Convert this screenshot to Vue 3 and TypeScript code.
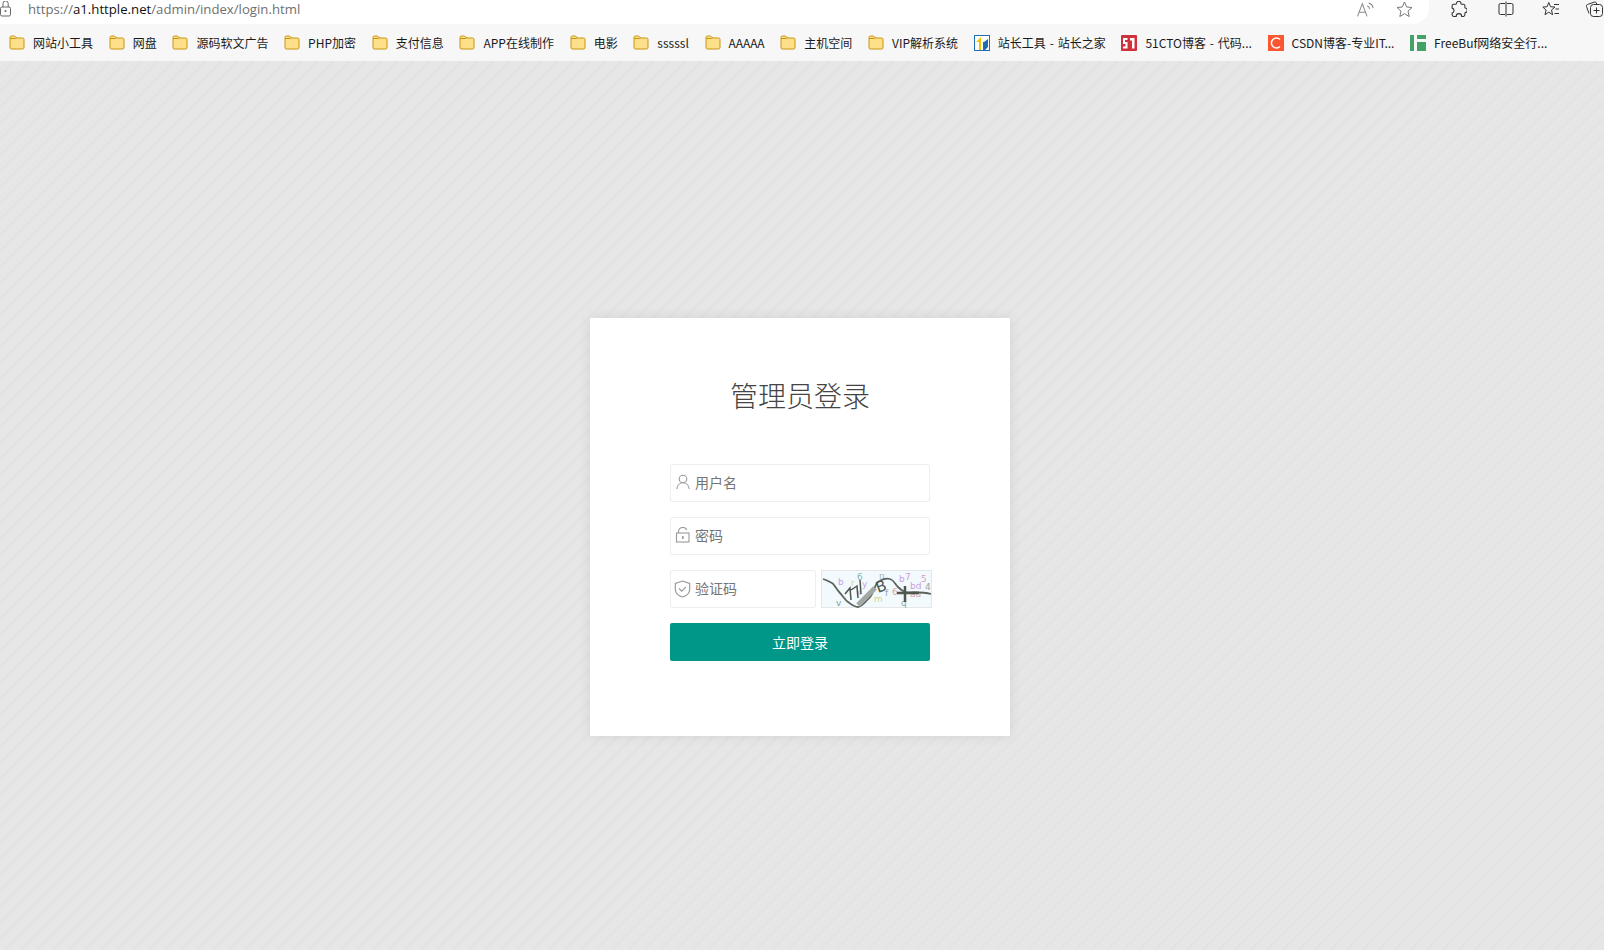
<script setup lang="ts">
interface Bookmark {
  label: string
  icon: 'folder' | 'chinaz' | 'cto' | 'csdn' | 'freebuf'
}

const bookmarks: Bookmark[] = [
  { label: '网站小工具', icon: 'folder' },
  { label: '网盘', icon: 'folder' },
  { label: '源码软文广告', icon: 'folder' },
  { label: 'PHP加密', icon: 'folder' },
  { label: '支付信息', icon: 'folder' },
  { label: 'APP在线制作', icon: 'folder' },
  { label: '电影', icon: 'folder' },
  { label: 'sssssl', icon: 'folder' },
  { label: 'AAAAA', icon: 'folder' },
  { label: '主机空间', icon: 'folder' },
  { label: 'VIP解析系统', icon: 'folder' },
  { label: '站长工具 - 站长之家', icon: 'chinaz' },
  { label: '51CTO博客 - 代码...', icon: 'cto' },
  { label: 'CSDN博客-专业IT...', icon: 'csdn' },
  { label: 'FreeBuf网络安全行...', icon: 'freebuf' },
]

// stray letters behind the captcha wire
const noise = [
  { t: 'b', x: 17, y: 15, c: '#c9a0dc' },
  { t: 'r', x: 30, y: 16, c: '#d8d48a' },
  { t: '6', x: 36, y: 10, c: '#7fb4b4' },
  { t: 'y', x: 41, y: 17, c: '#c9a0dc' },
  { t: 'k', x: 35, y: 25, c: '#c9a0dc' },
  { t: 'v', x: 15, y: 36, c: '#7f9f9f' },
  { t: 'm', x: 53, y: 32, c: '#d8d48a' },
  { t: 'f', x: 64, y: 26, c: '#a0a0c0' },
  { t: '6', x: 71, y: 25, c: '#d8a0a0' },
  { t: 'b', x: 78, y: 12, c: '#c9a0dc' },
  { t: '7', x: 84, y: 10, c: '#c9a0dc' },
  { t: 'q', x: 80, y: 36, c: '#8fa8a8' },
  { t: 'bd', x: 89, y: 19, c: '#c9a0dc' },
  { t: 'au', x: 89, y: 27, c: '#d8a0a0' },
  { t: '5', x: 100, y: 12, c: '#d8a0c0' },
  { t: '4', x: 104, y: 20, c: '#a0a0a0' },
  { t: 'n', x: 58, y: 9, c: '#a0b4b4' },
]
</script>

<template>
  <div class="page">
    <header class="top-bar">
      <div class="address">
        <svg class="lock" width="12" height="16" viewBox="0 0 12 16" fill="none" stroke="#666" stroke-width="1">
          <path d="M3 6V2.5a2.6 2.6 0 0 1 5.2 0V6" />
          <rect x="0.5" y="6" width="10" height="9" rx="1.5" />
          <circle cx="5.5" cy="10" r="1" fill="#666" stroke="none" />
        </svg>
        <span class="url">https://<b>a1.httple.net</b>/admin/index/login.html</span>
        <div class="address-actions">
          <svg width="17" height="15" viewBox="0 0 16 14" fill="none" stroke="#8a8a8a" stroke-width="1">
            <path d="M0.5 13.5 5 1.5 9.5 13.5M2 9.5h6" />
            <path d="M9.5 3.8c1.3.3 2.2 1.3 2.4 2.6M11 1c2.2.5 3.8 2.3 4.2 4.6" />
          </svg>
          <svg width="17" height="17" viewBox="0 0 17 17" fill="none" stroke="#777" stroke-width="1" stroke-linejoin="round">
            <path d="M8.5 1 10.7 6 16 6.5 12 10.1 13.2 15.5 8.5 12.7 3.8 15.5 5 10.1 1 6.5 6.3 6Z" />
          </svg>
        </div>
      </div>
      <div class="tools">
        <svg class="tool-puzzle" width="17" height="17" viewBox="0 0 16 16" fill="none" stroke="#333" stroke-width="1">
          <path d="M6 2.5a2.2 2.2 0 0 1 4.4 0c0 .4.3.5.6.5h1.5a1.5 1.5 0 0 1 1.5 1.500V6c0 .3.2.5.5.6a2.2 2.2 0 0 1 0 4.3c-.3.1-.5.3-.5.6v1.5a1.5 1.5 0 0 1-1.5 1.5H11a2.6 2.6 0 0 0-5.2 0H3.5A1.5 1.5 0 0 1 2 13v-1.8a2.3 2.3 0 0 0 0-4.5V4.5A1.5 1.5 0 0 1 3.5 3h2c.3 0 .5-.2.5-.5Z" />
        </svg>
        <span class="tool-divider"></span>
        <svg class="tool-split" width="16" height="16" viewBox="0 0 16 16" fill="none" stroke="#333" stroke-width="1">
          <path d="M7 2.500H2.500A1.500 1.500 0 0 0 1 4v8a1.500 1.500 0 0 0 1.500 1.500H7M8 0.500V15.500M9 2.500h4.500A1.500 1.500 0 0 1 15 4v8a1.500 1.500 0 0 1-1.500 1.500H9" />
        </svg>
        <svg class="tool-fav" width="18" height="17" viewBox="0 0 18 17" fill="none" stroke="#333" stroke-width="1" stroke-linejoin="round">
          <path d="M6.800 1.500 8.500 5.700 13 6.100 9.500 9 10.600 13.700 6.800 11.200 3 13.700 4.100 9 0.800 6.100 5.100 5.700Z" />
          <path d="M12 3.500h5M13.500 8h3.500M12.500 12.500h4.500" />
        </svg>
        <svg class="tool-coll" width="24" height="20" viewBox="0 0 24 20" fill="none" stroke="#333" stroke-width="1">
          <path d="M4 14.500 1.500 7.500a1.500 1.500 0 0 1 1-2L9.500 3a1.500 1.500 0 0 1 1.800 1l.5 1.500" />
          <rect x="5.500" y="5.500" width="12" height="12" rx="3" />
          <path d="M11.500 8.500v6M8.500 11.500h6" />
        </svg>
      </div>
    </header>

    <nav class="bookmarks">
      <a v-for="item in bookmarks" :key="item.label" class="bookmark">
        <svg v-if="item.icon === 'folder'" width="16" height="15" viewBox="0 0 16 15">
          <path d="M1 3V2.500A1.500 1.500 0 0 1 2.500 1h3l2 2h6A1.500 1.500 0 0 1 15 4.500v8a1.500 1.500 0 0 1-1.500 1.500h-11A1.500 1.500 0 0 1 1 12.500Z" fill="#ffe08a" stroke="#c8930f" />
          <path d="M1 3.500h5.500L8 2" fill="none" stroke="#c8930f" />
        </svg>
        <svg v-else-if="item.icon === 'chinaz'" width="16" height="16" viewBox="0 0 16 16">
          <rect x="0.5" y="0.5" width="15" height="15" fill="#fff" stroke="#1a6fb5" />
          <path d="M2 7 7 2V15H5V7Z" fill="#f5c400" />
          <path d="M9 15V7h1l4 -3v8l-3 3Z" fill="#1a6fb5" />
        </svg>
        <svg v-else-if="item.icon === 'cto'" width="16" height="16" viewBox="0 0 16 16">
          <rect width="16" height="16" rx="1" fill="#d0323c" />
          <path d="M2 3h4.500v2H4v2h2.500v6.500H2V11.500h2.500V9H2ZM9 3h4.500v10.500H11V5.500H9Z" fill="#fff" />
        </svg>
        <svg v-else-if="item.icon === 'csdn'" width="16" height="16" viewBox="0 0 16 16">
          <rect width="16" height="16" fill="#fc5531" />
          <path d="M12 4.500A5 5 0 1 0 12 11.500" fill="none" stroke="#fff" stroke-width="1.5" />
        </svg>
        <svg v-else width="16" height="16" viewBox="0 0 16 16" fill="#43a366">
          <rect width="4" height="16" />
          <rect x="7" width="9" height="4" />
          <rect x="7" y="7" width="9" height="9" />
        </svg>
        <span>{{ item.label }}</span>
      </a>
    </nav>

    <main class="stage">
      <section class="card">
        <h1 class="title">管理员登录</h1>
        <form class="form" @submit.prevent>
          <div class="field">
            <svg class="field-icon" width="16" height="16" viewBox="0 0 16 16" fill="none" stroke="#999" stroke-width="1.1">
              <circle cx="8" cy="5" r="3.800" />
              <path d="M1.800 15c.3-3.600 2.800-6.200 6.200-6.200s5.900 2.600 6.200 6.200" />
            </svg>
            <input class="input" type="text" placeholder="用户名" />
          </div>
          <div class="field">
            <svg class="field-icon" width="16" height="16" viewBox="0 0 16 16" fill="none" stroke="#999" stroke-width="1.1">
              <path d="M3.500 6V4.500a4.300 4.300 0 0 1 8.300-1.300" />
              <rect x="1.500" y="6" width="12.500" height="9" />
              <path d="M7.800 9v3" stroke-width="1.6" />
            </svg>
            <input class="input" type="password" placeholder="密码" />
          </div>
          <div class="captcha-row">
            <div class="field captcha-field">
              <svg class="field-icon shield" width="17" height="18" viewBox="0 0 16 17" fill="none" stroke="#999" stroke-width="1.1">
                <path d="M8 1 14.800 3.300V8.500C14.800 12.300 12 15 8 16 4 15 1.200 12.300 1.200 8.500V3.300Z" />
                <path d="M4.800 8 7.300 10.500 11.300 6.500" />
              </svg>
              <input class="input" type="text" placeholder="验证码" />
            </div>
            <svg class="captcha" width="111" height="38" viewBox="0 0 111 38">
              <rect x="0.5" y="0.5" width="110" height="37" fill="#f2fafe" stroke="#e6e6e6" />
              <text v-for="(n, i) in noise" :key="i" :x="n.x" :y="n.y" :fill="n.c" class="noise">{{ n.t }}</text>
              <path d="M2 9C6 10 9 12 11 13S16 20 19 23 24 30 27 32 33 37 37 37 45 31 49 27 54 14 57 12 65 8 69 9 74 14 77 17 81 21 84 22 100 21 110 24" fill="none" stroke="#5c645c" stroke-width="1.8" />
              <path d="M24 24 29 18 30 30M30 20 36 16 37 28M39 10 40 24" fill="none" stroke="#4e564e" stroke-width="1.5" />
              <path d="M37 35 54 18" fill="none" stroke="#a4a8a4" stroke-width="5" />
              <text x="57" y="23" class="glyph" transform="rotate(-20 57 23)">B</text>
              <path d="M76 23H98M84 16V32" fill="none" stroke="#4e564e" stroke-width="2.5" />
            </svg>
          </div>
          <button class="submit" type="submit">立即登录</button>
        </form>
      </section>
    </main>
  </div>
</template>

<style>
html,
body {
  margin: 0;
  height: 100%;
  overflow: hidden;
}
</style>

<style scoped>
.page {
  width: 1604px;
  height: 950px;
  display: flex;
  flex-direction: column;
  font-family: "Noto Sans CJK SC", "Noto Sans", sans-serif;
}
.top-bar {
  height: 24px;
  display: flex;
  background: #f7f7f7;
}
.address {
  width: 1429px;
  flex: none;
  display: flex;
  align-items: center;
  background: #fff;
  border-radius: 0 0 16px 0;
  box-sizing: border-box;
  overflow: hidden;
}
.lock {
  margin: -6px 0 0 0;
  flex: none;
}
.url {
  margin-left: 16px;
  margin-top: -6px;
  font-family: "Open Sans", "Liberation Sans", sans-serif;
  font-size: 13.2px;
  color: #6f6f6f;
}
.url b {
  font-weight: 400;
  color: #111;
}
.address-actions {
  margin-left: auto;
  margin-top: -5px;
  margin-right: 16px;
  display: flex;
  align-items: center;
  gap: 22px;
}
.tools {
  flex: 1;
  display: flex;
  align-items: flex-start;
  padding-top: 1px;
  overflow: hidden;
}
.tools svg {
  flex: none;
}
.tool-puzzle {
  margin-left: 21px;
}
.tool-divider {
  width: 1px;
  height: 16px;
  margin-left: 15px;
  background: #d0d0d0;
}
.tool-split {
  margin-left: 16px;
}
.tool-fav {
  margin-left: 28px;
}
.tool-coll {
  margin-left: 25px;
  margin-top: -2px;
}
.bookmarks {
  height: 37px;
  display: flex;
  align-items: center;
  gap: 15.7px;
  padding-left: 9px;
  background: #f7f7f7;
  font-size: 12px;
  word-spacing: 1.2px;
  color: #1a1a1a;
  white-space: nowrap;
  overflow: hidden;
}
.bookmark {
  display: flex;
  align-items: center;
  gap: 8px;
}
.bookmark svg {
  flex: none;
}
.stage {
  flex: 1;
  display: flex;
  justify-content: center;
  align-items: flex-start;
  padding: 257px 4px 0 0;
  background-color: #e6e6e6;
  background-image: repeating-linear-gradient(135deg, transparent 0, transparent 9.3px, #dfdfdf 10.3px, transparent 11.3px);
}
.card {
  width: 420px;
  height: 418px;
  box-sizing: border-box;
  padding: 53px 80px 0;
  background: #fff;
  box-shadow: 0 0 12px rgba(0, 0, 0, 0.08);
}
.title {
  margin: 0;
  font-size: 28px;
  line-height: 48px;
  font-weight: 300;
  text-align: center;
  color: #444;
}
.form {
  margin-top: 45px;
  display: flex;
  flex-direction: column;
  gap: 15px;
}
.field {
  position: relative;
  height: 38px;
}
.field-icon {
  position: absolute;
  left: 5px;
  top: 10px;
}
.shield {
  left: 4px;
}
.input {
  width: 100%;
  height: 100%;
  box-sizing: border-box;
  padding: 0 10px 2px 24px;
  border: 1px solid #eee;
  border-radius: 2px;
  outline: none;
  background: #fff;
  font-family: inherit;
  font-size: 14px;
  color: #333;
}
.input::placeholder {
  color: #757575;
}
.captcha-row {
  display: flex;
  gap: 5px;
  width: 262px;
}
.captcha-field {
  width: 146px;
  flex: none;
}
.captcha {
  display: block;
  flex: none;
}
.noise {
  font-family: "DejaVu Sans", sans-serif;
  font-size: 9px;
}
.glyph {
  font-family: "DejaVu Sans", sans-serif;
  font-size: 15px;
  fill: #4e564e;
}
.submit {
  height: 38px;
  border: none;
  border-radius: 2px;
  background: #009688;
  color: #fff;
  font-family: inherit;
  font-size: 14px;
}
</style>
